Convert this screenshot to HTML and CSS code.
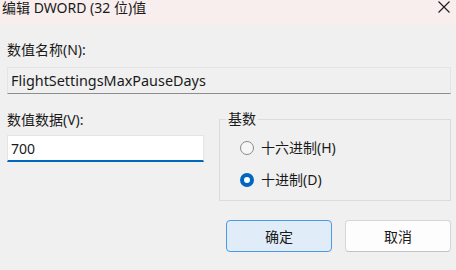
FILE: index.html
```html
<!DOCTYPE html>
<html lang="zh-CN">
<head>
  <meta charset="UTF-8">
  <meta name="viewport" content="width=device-width, initial-scale=1.0">
  <title>编辑 DWORD (32 位)值</title>
  <link rel="stylesheet" href="styles.css">
</head>
<body>
  <div class="dialog">
    <div class="titlebar">
      <span class="title">编辑 DWORD (32 位)值</span>
      <span class="close">
        <svg width="12" height="12" viewBox="0 0 12 12">
          <path d="M0.5 0.5 L11.5 11.5 M11.5 0.5 L0.5 11.5" stroke="#1b1b1b" stroke-width="1.1" fill="none"/>
        </svg>
      </span>
    </div>

    <div class="content">
      <div class="label name-label">数值名称(N):</div>
      <div class="field field-readonly">FlightSettingsMaxPauseDays</div>

      <div class="middle">
        <div class="data-col">
          <div class="label">数值数据(V):</div>
          <div class="field field-edit">700</div>
        </div>

        <fieldset class="base-group">
          <legend>基数</legend>
          <label class="radio">
            <span class="dot"></span>
            <span>十六进制(H)</span>
          </label>
          <label class="radio">
            <span class="dot dot-checked"></span>
            <span>十进制(D)</span>
          </label>
        </fieldset>
      </div>

      <div class="buttons">
        <button class="btn btn-default">确定</button>
        <button class="btn">取消</button>
      </div>
    </div>
  </div>
</body>
</html>
```

FILE: styles.css
```css
body {
  margin: 0;
  background-color: #f0f0f0;
  font-family: "Noto Sans", "Noto Sans CJK SC", sans-serif;
  font-size: 14px;
  color: #1a1a1a;
}
.dialog {
  width: 456px;
  height: 270px;
  overflow: hidden;
}
.titlebar {
  height: 25px;
  background-color: #f9eeee;
  display: flex;
  justify-content: space-between;
  align-items: flex-start;
}
.title {
  padding-left: 2px;
  line-height: 16px;
}
.close {
  width: 12px;
  height: 12px;
  margin: 1px 6px 0 0;
  display: flex;
}
.content {
  padding: 0 5px 0 7px;
}
.label {
  line-height: 20px;
}
.name-label {
  margin-top: 15px;
  margin-bottom: 7px;
}
.field {
  box-sizing: border-box;
  height: 27px;
  padding-left: 3px;
  line-height: 25px;
  border: 1px solid #e4e4e4;
}
.field-readonly {
  font-size: 14.4px;
  border-bottom-color: #8d8d8d;
  background-color: #f0f0f0;
}
.field-edit {
  width: 197px;
  background-color: #fff;
  border-bottom: 2px solid #0067c0;
}
.middle {
  display: grid;
  grid-template-columns: 197px 232px;
  column-gap: 15px;
  margin-top: 15px;
}
.data-col .label {
  margin-top: 1px;
  margin-bottom: 5px;
}
.base-group {
  margin: 0;
  padding: 9px 0 1px 20px;
  border: 1px solid #dcdcdc;
  height: 92px;
  box-sizing: border-box;
  display: flex;
  flex-direction: column;
  gap: 12px;
}
.base-group legend {
  padding: 0 2px;
  margin-left: -14px;
  line-height: 20px;
}
.radio {
  display: flex;
  align-items: center;
  gap: 7px;
  line-height: 20px;
}
.dot {
  box-sizing: border-box;
  width: 14px;
  height: 14px;
  border-radius: 50%;
  border: 1px solid #8a8a8a;
  background-color: #f6f6f6;
}
.dot-checked {
  border: 4px solid #0067c0;
  background-color: #fff;
}
.buttons {
  display: flex;
  justify-content: flex-end;
  gap: 13px;
  margin-top: 19px;
}
.btn {
  box-sizing: border-box;
  width: 106px;
  height: 32px;
  font-family: inherit;
  font-size: 14px;
  color: #1a1a1a;
  background-color: #fdfdfd;
  border: 1px solid #d6d6d6;
  border-bottom-color: #c2c2c2;
  border-radius: 4px;
}
.btn-default {
  background-color: #e0edf9;
  border: 1px solid #4a9be3;
}
```
